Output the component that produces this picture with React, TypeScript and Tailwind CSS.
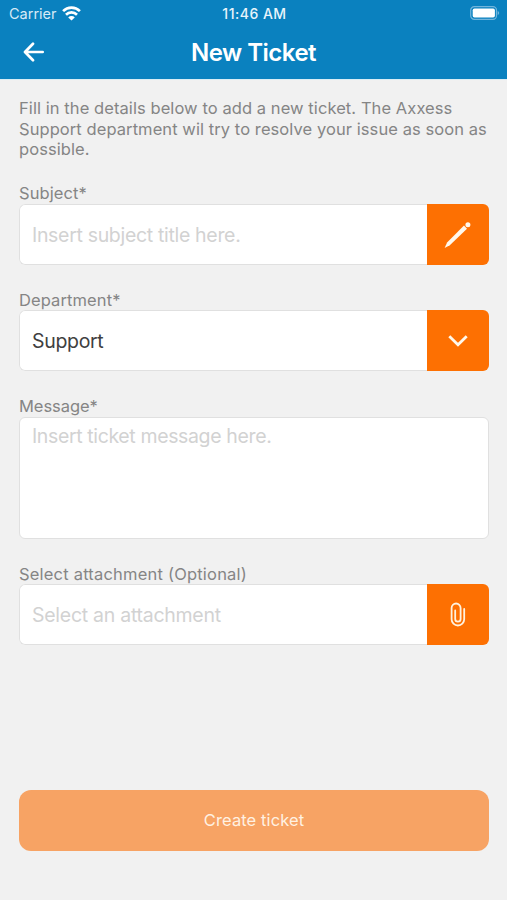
import React from "react";

type FieldProps = {
    label: string;
    labelClass?: string;
    text: string;
    textClass: string;
    icon: React.ReactNode;
};

const Field: React.FC<FieldProps> = ({ label, labelClass = "leading-5 tracking-[0.1px]", text, textClass, icon }) => (
    <div>
        <label className={`block h-5 text-[16.5px] text-[#858585] ${labelClass}`}>{label}</label>
        <div className="flex h-[61px] overflow-hidden rounded-md">
            <div className="flex flex-1 items-center rounded-l-md border border-r-0 border-[#e0e0e0] bg-white pt-[2px] pl-3">
                <span className={textClass}>{text}</span>
            </div>
            <button className="flex w-[62px] items-center justify-center bg-[#fd7002]">{icon}</button>
        </div>
    </div>
);

const PencilIcon = () => (
    <svg width="28" height="28" viewBox="0 0 28 28" fill="#fff8ec">
        <path d="M20 4.6 23 7.8 5.8 24.3 0.6 27 3.1 21.5Z" />
        <circle cx="23.9" cy="3.8" r="2.5" />
    </svg>
);

const ChevronIcon = () => (
    <svg width="20" height="12" viewBox="0 0 20 12" fill="none" stroke="#fff8ec" strokeWidth="2.8">
        <path d="M1.3 1.2 10 9.7l8.7-8.5" />
    </svg>
);

const ClipIcon = () => (
    <svg width="16" height="26" viewBox="0 0 16 26" fill="none" stroke="#fff2df" strokeWidth="1.8" strokeLinecap="round">
        <path d="M14.2 7v10.2a6.3 6.3 0 0 1-12.6 0V6a4.5 4.5 0 0 1 9 0v11a2.7 2.7 0 0 1-5.4 0V8.4" />
    </svg>
);

const StatusBar = () => (
    <div className="grid h-7 grid-cols-3 items-center pl-[9px] pr-[7px] text-white">
        <div className="flex items-center gap-[5px]">
            <span className="text-[14.5px] leading-7 text-[#d6eaf6]">Carrier</span>
            <svg className="-mt-0.5" width="19" height="15" viewBox="0 0 19 15" fill="none" stroke="#fff" strokeWidth="2.7">
                <path d="M1.1 5.1a12 12 0 0 1 16.8 0M4 8.7a7.8 7.8 0 0 1 11 0" />
                <path d="M9.5 14.6 6.2 11.4a4.7 4.7 0 0 1 6.6 0Z" fill="#fff" stroke="none" />
            </svg>
        </div>
        <span className="pb-0.5 text-center text-[14px] font-medium tracking-[0.5px] whitespace-nowrap text-[#e8f4fb]">11:46 AM</span>
        <svg className="-mt-0.5 justify-self-end" width="30" height="15" viewBox="0 0 30 15" fill="none">
            <rect x="0.7" y="0.7" width="25.8" height="12.6" rx="3.6" stroke="#72b5dc" strokeWidth="1.2" />
            <rect x="2.7" y="2.4" width="22.2" height="9.2" rx="1.8" fill="#fff" />
            <path d="M27.7 5v4c2-.7 2-3.3 0-4Z" fill="#72b5dc" />
        </svg>
    </div>
);

const App: React.FC = () => {
    return (
        <main className="h-[900px] w-full overflow-hidden bg-[#f1f1f1] font-['Inter',sans-serif]">
            <header className="h-[79px] bg-[#0a81bf]">
                <StatusBar />
                <div className="grid h-12 grid-cols-[60px_1fr_60px] items-center text-white">
                    <svg className="ml-[23px]" width="22" height="20" viewBox="0 0 22 20" fill="none" stroke="#fff" strokeWidth="2.7" strokeLinecap="round" strokeLinejoin="round">
                        <path d="M19.7 10H2.3M10 1.8 2 10l8 8.2" />
                    </svg>
                    <h1 className="pt-px text-center text-2xl font-semibold tracking-[-0.5px]">New Ticket</h1>
                </div>
            </header>
            <div className="h-px bg-[#d9edf5]" />

            <div className="pt-[18px] pr-[18px] pl-[19px]">
                <p className="text-[16.5px] leading-[20.7px] tracking-[0.075px] text-[#858585]">
                    Fill in the details below to add a new ticket. The Axxess
                    <br />
                    Support department wil try to resolve your issue as soon as
                    <br />
                    possible.
                </p>

                <form className="mt-6 flex flex-col gap-[25.3px]">
                    <Field
                        label="Subject*"
                        labelClass="leading-[19px] tracking-[0.1px]"
                        text="Insert subject title here."
                        textClass="text-[19.5px] tracking-[-0.32px] text-[#d2d2d2]"
                        icon={<PencilIcon />}
                    />
                    <Field
                        label="Department*"
                        text="Support"
                        textClass="text-[19.5px] tracking-[-0.32px] text-[#404040]"
                        icon={<ChevronIcon />}
                    />
                    <div>
                        <label className="block h-5 text-[16.5px] leading-[19px] tracking-[-0.05px] text-[#858585]">Message*</label>
                        <div className="h-[122px] rounded-md border border-[#e0e0e0] bg-white pt-[5px] pl-3 text-[19.5px] leading-[26px] tracking-[-0.37px] text-[#d2d2d2]">
                            Insert ticket message here.
                        </div>
                    </div>
                    <Field
                        label="Select attachment (Optional)"
                        labelClass="leading-5 tracking-[0.2px]"
                        text="Select an attachment"
                        textClass="text-[19.5px] tracking-[-0.27px] text-[#d2d2d2]"
                        icon={<ClipIcon />}
                    />
                </form>

                <button className="mt-[145px] h-[61px] w-full rounded-xl bg-[#f7a364] text-[16.5px] tracking-[0.1px] text-[#fff1e2]">
                    Create ticket
                </button>
            </div>
        </main>
    );
};

export default App;
